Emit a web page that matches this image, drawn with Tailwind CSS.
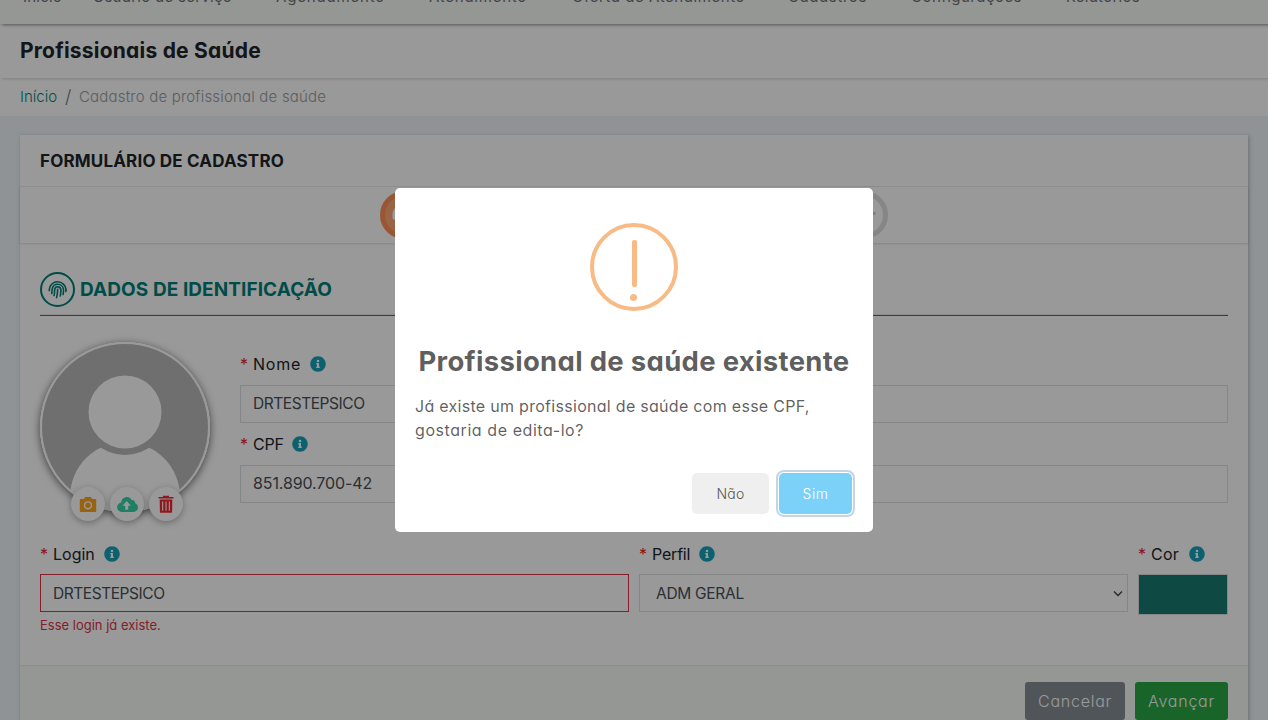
<!DOCTYPE html>
<html lang="pt-BR">
<head>
<meta charset="utf-8">
<title>Profissionais de Saúde</title>
<script src="https://cdn.jsdelivr.net/npm/@tailwindcss/browser@4"></script>
</head>
<body class="bg-white font-['Inter',sans-serif] text-[#212529] [font-feature-settings:'cv11']">
<svg class="hidden">
  <symbol id="info" viewBox="0 0 512 512"><path fill="currentColor" d="M256 8C119 8 8 119 8 256s111 248 248 248 248-111 248-248S393 8 256 8zm0 110a42 42 0 1 1 0 84 42 42 0 0 1 0-84zm56 254c0 7-5 12-12 12h-88c-7 0-12-5-12-12v-24c0-7 5-12 12-12h12v-64h-12c-7 0-12-5-12-12v-24c0-7 5-12 12-12h64c7 0 12 5 12 12v100h12c7 0 12 5 12 12z"/></symbol>
</svg>
<div class="relative flex h-[720px] w-[1268px] flex-col overflow-hidden bg-[#eef5f9]">

  <header class="relative z-30 h-6 shrink-0 bg-[#f8fcf9] shadow-[2px_1px_3px_rgba(0,0,0,0.45)]">
    <nav class="-mt-3.5 flex pl-[23px] text-[15px] leading-[22px] whitespace-nowrap text-[#6c7277]">
      <span class="w-[70px] tracking-[0.21px]">Início</span>
      <span class="w-[183px] tracking-[0.27px]">Usuário de serviço</span>
      <span class="w-[153px] tracking-[0.82px]">Agendamento</span>
      <span class="w-[143px] tracking-[0.75px]">Atendimento</span>
      <span class="w-[216px] tracking-[0.56px]">Oferta de Atendimento</span>
      <span class="w-[123px] tracking-[0.59px]">Cadastros</span>
      <span class="w-[155px] tracking-[0.47px]">Configurações</span>
      <span class="tracking-[0.28px]">Relatórios</span>
    </nav>
  </header>

  <div class="relative z-20 flex h-[54px] shrink-0 items-center bg-white px-5 shadow-[2px_1px_3px_rgba(0,0,0,0.18)]">
    <h1 class="text-[21px] leading-7 font-bold tracking-[0.22px]">Profissionais de Saúde</h1>
  </div>

  <div class="flex h-[38px] shrink-0 items-center bg-white px-5 text-[15px] leading-[22px] font-light">
    <span class="w-[45px] text-[#008578]">Início</span>
    <span class="w-3.5 text-lg leading-[22px] text-[#6c757d]">/</span>
    <span class="tracking-[0.19px] text-[#969ca2]">Cadastro de profissional de saúde</span>
  </div>

  <main class="mx-5 mt-[19px] flex shrink-0 flex-col bg-white shadow-[1px_1px_4px_rgba(0,0,0,0.25)]">
    <div class="flex h-[52px] items-center border-b border-[#ededed] px-5 pt-0.5">
      <h2 class="text-[17px] font-bold tracking-[0.18px]">FORMULÁRIO DE CADASTRO</h2>
    </div>

    <div class="flex h-[56px] items-center justify-between px-[360px] shadow-[0_1px_2px_rgba(0,0,0,0.15)]">
      <svg class="size-12" viewBox="0 0 48 48"><circle cx="24" cy="24" r="21.5" fill="#ffa873" stroke="#ff9058" stroke-width="5"/><path d="M14 27c-1-7 3-13 10-13s11 5 11 12" fill="none" stroke="#fff" stroke-width="3" stroke-linecap="round"/></svg>
      <svg class="size-12" viewBox="0 0 48 48"><circle cx="24" cy="24" r="21.5" fill="#fff" stroke="#dfdfdf" stroke-width="5"/><path d="M13 22.500h21" fill="none" stroke="#d2d2d2" stroke-width="3.500" stroke-linecap="round"/></svg>
    </div>

    <section class="flex h-[422px] flex-col px-5 pt-[29px]">
      <div class="flex h-[42px] items-start gap-[5px] text-[#007f79]">
        <svg class="size-[35px]" viewBox="0 0 35 35" fill="none" stroke="currentColor" stroke-linecap="round">
          <circle cx="17.500" cy="17.500" r="16.500" stroke-width="2"/>
          <g stroke-width="1.600">
            <path d="M10.300 14.200C12 11.300 14.500 9.800 17.600 9.800c4.500 0 8.200 3.500 8.500 8"/>
            <path d="M9.300 18.700c-.1-2 .4-3 .9-4.200M26 17.800c0 .8 0 1.200-.2 1.700"/>
            <path d="M11.700 21.500c.5-1.500.1-2.700.4-4.200.5-3 2.800-5 5.600-5 3.300 0 5.700 2.500 5.800 5.700 0 1.600-.1 3-.4 4.500"/>
            <path d="M14 23.500c.7-2 .5-3.800.6-5.500.1-1.900 1.300-3.200 3.100-3.200s3.100 1.400 3.200 3.300c0 2-.2 4-.6 5.800"/>
            <path d="M17.600 17.400c.1 2.600-.1 5-1 8.200"/>
          </g>
        </svg>
        <h3 class="text-[19px] leading-[35px] font-bold tracking-[0.08px]">DADOS DE IDENTIFICAÇÃO</h3>
      </div>
      <div class="h-0.5 shrink-0 border-t border-b border-t-[#eaeaea] border-b-[#16808a]"></div>

      <div class="mt-[26px] flex h-[200px] shrink-0">
        <div class="flex w-[200px] flex-col">
          <div class="size-[170px] shrink-0 rounded-full shadow-[0_2px_8px_rgba(0,0,0,0.6)]">
            <svg class="size-[170px]" viewBox="0 0 170 170">
              <defs><clipPath id="face"><circle cx="85" cy="85" r="83.500"/></clipPath></defs>
              <circle cx="85" cy="85" r="85" fill="#fff"/>
              <g clip-path="url(#face)">
                <rect width="170" height="170" fill="#bababa"/>
                <circle cx="85" cy="155" r="55" fill="#fff"/>
                <circle cx="85" cy="70" r="43" fill="#bababa"/>
                <circle cx="85" cy="70" r="36.500" fill="#fff"/>
              </g>
              <circle cx="85" cy="85" r="84" fill="none" stroke="#fff" stroke-width="2"/>
            </svg>
          </div>
          <div class="relative -mt-[25px] ml-[31px] flex gap-[5px]">
            <span class="flex size-[34px] items-center justify-center rounded-full bg-white shadow-[0_2px_7px_rgba(0,0,0,0.3)]">
              <svg class="size-[18px]" viewBox="0 0 18 18"><path fill="#ffa41b" fill-rule="evenodd" d="M6 2h6l1 2h3.200c.6 0 1 .4 1 1v11c0 .6-.4 1-1 1H1.800c-.6 0-1-.4-1-1V5c0-.6.4-1 1-1H5zM9 6.200a4.100 4.100 0 1 0 0 8.200 4.100 4.100 0 0 0 0-8.200zM9 7.600a2.700 2.700 0 1 1 0 5.400 2.700 2.700 0 0 1 0-5.400z"/></svg>
            </span>
            <span class="flex size-[34px] items-center justify-center rounded-full bg-white shadow-[0_2px_7px_rgba(0,0,0,0.3)]">
              <svg class="h-[15px] w-[21px]" viewBox="0 0 21 15"><path fill="#34d3a6" fill-rule="evenodd" d="M18 6C18.200 4 16.600 2.900 14.700 3.100 13.800 1.200 12 .1 10 .1 6.800.1 4.400 2.400 4.300 5.600 1.800 6.100.1 8 .1 10.200c0 2.600 2 4.700 4.600 4.700h11.800c2.500 0 4.500-2 4.500-4.500C21 8.300 19.800 6.600 18 6zM11.200 8.800v4H8.200v-4H5.500L9.700 4 13.900 8.800z"/></svg>
            </span>
            <span class="flex size-[34px] items-center justify-center rounded-full bg-white shadow-[0_2px_7px_rgba(0,0,0,0.3)]">
              <svg class="h-[18px] w-[16px]" viewBox="0 0 16 18"><path fill="#f0282f" fill-rule="evenodd" d="M.5 2H5V.8h6V2h4.500v1.600H.5zM1.700 4.600h12.600l-.2 12.200c0 .6-.4 1-1 1H2.900c-.6 0-1-.4-1-1zM4.100 6.500v9.300h1.100V6.500zm3.350 0v9.300h1.100V6.500zm3.350 0v9.300h1.100V6.500z"/></svg>
            </span>
          </div>
        </div>
        <div class="flex flex-1 flex-col pt-2.5">
          <label class="flex h-6 items-center text-base leading-6"><span class="w-[13px] text-[#f02020]">*</span><span class="tracking-[0.75px]">Nome</span><svg class="ml-[9px] size-4 text-[#17a2b8]"><use href="#info"/></svg></label>
          <div class="mt-[9px] flex h-[38px] items-center border border-[#dcdfe2] px-3 text-[15.500px] tracking-[-0.45px] text-[#495057]">DRTESTEPSICO</div>
          <label class="mt-[9px] flex h-6 items-center text-base leading-6"><span class="w-[13px] text-[#f02020]">*</span><span class="w-[30px] tracking-[-0.2px]">CPF</span><svg class="ml-[9px] size-4 text-[#17a2b8]"><use href="#info"/></svg></label>
          <div class="mt-[9px] flex h-[38px] items-center border border-[#dcdfe2] px-3 pb-0.5 text-base tracking-[-0.12px] text-[#495057]">851.890.700-42</div>
        </div>
      </div>

      <div class="flex gap-2.5">
        <div class="w-[589px]">
          <label class="flex h-6 items-center text-base leading-6"><span class="w-[13px] text-[#f02020]">*</span><span>Login</span><svg class="ml-[9px] size-4 text-[#17a2b8]"><use href="#info"/></svg></label>
          <div class="mt-2 flex h-[38px] items-center border border-[#dc3545] px-3 pt-px text-[15.500px] tracking-[-0.45px] text-[#495057]">DRTESTEPSICO</div>
          <p class="mt-[3px] text-[13px] leading-5 text-[#dc3545]">Esse login já existe.</p>
        </div>
        <div class="w-[489px]">
          <label class="flex h-6 items-center text-base leading-6"><span class="w-[13px] text-[#f02020]">*</span><span class="w-[38px] tracking-[-0.2px]">Perfil</span><svg class="ml-[9px] size-4 text-[#17a2b8]"><use href="#info"/></svg></label>
          <div class="mt-2 flex h-[38px] items-center justify-between border border-[#dcdfe2] pt-px pr-1 pl-4 text-[15.500px] tracking-[-0.3px] text-[#495057]">ADM GERAL
            <svg class="h-2.5 w-2.5" viewBox="0 0 10 10" fill="none" stroke="#444" stroke-width="1.400"><path d="M1 2.500l4 4 4-4"/></svg>
          </div>
        </div>
        <div class="w-[90px]">
          <label class="flex h-6 items-center text-base leading-6"><span class="w-[13px] text-[#f02020]">*</span><span class="w-[29px] tracking-[0.23px]">Cor</span><svg class="ml-[9px] size-4 text-[#17a2b8]"><use href="#info"/></svg></label>
          <div class="mt-2 h-[41px] border border-[#dcdfe2] bg-[#197b71]"></div>
        </div>
      </div>
    </section>

    <footer class="flex h-[70px] justify-end gap-2.5 border-t border-[#e8eae9] bg-[#f8fcf9] px-5 pt-4 text-base font-light text-white">
      <span class="flex h-[38px] w-[100px] items-center justify-center rounded-[3px] bg-[#868e96] tracking-[0.75px]">Cancelar</span>
      <span class="flex h-[38px] w-[93px] items-center justify-center rounded-[3px] bg-[#28a745] tracking-[0.76px]">Avançar</span>
    </footer>
  </main>

  <div class="absolute inset-0 z-40 flex items-center justify-center bg-black/40">
    <div class="flex h-[344px] w-[478px] flex-col items-center rounded-[5px] bg-white pt-[35px]">
      <svg class="size-[88px] shrink-0" viewBox="0 0 88 88" fill="#f8bb86"><circle cx="44" cy="44" r="42" fill="none" stroke="#f8bb86" stroke-width="4"/><rect x="42" y="17" width="5" height="47" rx="2"/><circle cx="43.500" cy="74.500" r="3.500"/></svg>
      <h2 class="mt-8 text-[27.500px] leading-9 font-bold tracking-[0.3px] whitespace-nowrap text-black/65">Profissional de saúde existente</h2>
      <p class="mt-[15px] w-full px-5 text-base leading-6 text-black/64"><span class="tracking-[0.29px]">Já existe um profissional de saúde com esse CPF,</span><br><span class="tracking-[0.57px]">gostaria de edita-lo?</span></p>
      <div class="mt-[31px] flex w-full justify-end gap-2.5 pr-[21px] text-sm font-light">
        <span class="flex h-[41px] w-[77px] items-center justify-center rounded-[5px] bg-[#efefef] tracking-[0.21px] text-[#555]">Não</span>
        <span class="flex h-[41px] w-[73px] items-center justify-center rounded-[5px] bg-[#7cd1f9] tracking-[0.55px] text-white shadow-[0_0_0_1px_#fff,0_0_0_3px_rgba(43,114,165,0.29)]">Sim</span>
      </div>
    </div>
  </div>
</div>
</body>
</html>
